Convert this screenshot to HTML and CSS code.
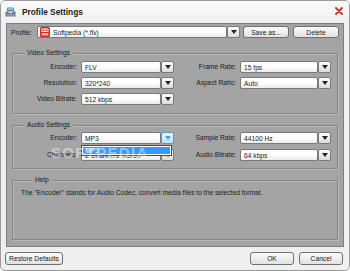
FILE: index.html
```html
<!DOCTYPE html>
<html lang="en">
<head>
  <meta charset="UTF-8">
  <title>Profile Settings</title>
  <link rel="stylesheet" href="styles.css">
</head>
<body>
  <div class="window">
    <div class="titlebar">
      <svg class="app-icon" width="11" height="10" viewBox="0 0 11 10">
        <rect x="2" y="0.5" width="7" height="4" rx="1" fill="#4a90d0"/>
        <rect x="3" y="1.5" width="5" height="1" fill="#cfe6fa"/>
        <path d="M0.5 4.5 h2.5 l1 1.5 h3 l1 -1.5 h2.5 v5 h-10 z" fill="#6a7686"/>
        <rect x="1.5" y="7" width="8" height="1.5" fill="#9aa6b4"/>
      </svg>
      <span class="title">Profile Settings</span>
      <svg class="close" width="8" height="8" viewBox="0 0 8 8">
        <path d="M1 1 L7 7 M7 1 L1 7" stroke="#c0392b" stroke-width="1.8" stroke-linecap="round"/>
      </svg>
    </div>

    <div class="panel">
      <div class="profile-row">
        <span class="profile-label">Profile:</span>
        <div class="combo profile-combo">
          <div class="field">
            <svg class="yt" width="10" height="10" viewBox="0 0 10 10">
              <rect x="0" y="0" width="10" height="10" rx="1.5" fill="#d42a1f"/>
              <rect x="1.5" y="1.5" width="7" height="3.5" rx="0.8" fill="#fff"/>
              <rect x="2.5" y="2.5" width="2" height="1.5" fill="#d42a1f"/>
              <rect x="5.5" y="2.5" width="2" height="1.5" fill="#d42a1f"/>
              <rect x="1.5" y="6" width="7" height="2.5" rx="0.8" fill="#f3b7b2"/>
            </svg>
            Softpedia (*.flv)
          </div>
          <div class="drop"></div>
        </div>
        <button class="btn save">Save as...</button>
        <button class="btn delete">Delete</button>
      </div>

      <fieldset class="group video">
        <legend>Video Settings</legend>
        <div class="grid">
          <span class="label">Encoder:</span>
          <div class="combo"><div class="field">FLV</div><div class="drop"></div></div>
          <span class="label">Frame Rate:</span>
          <div class="combo"><div class="field">15 fps</div><div class="drop"></div></div>

          <span class="label">Resolution:</span>
          <div class="combo"><div class="field">320*240</div><div class="drop"></div></div>
          <span class="label">Aspect Ratio:</span>
          <div class="combo"><div class="field">Auto</div><div class="drop"></div></div>

          <span class="label">Video Bitrate:</span>
          <div class="combo"><div class="field">512 kbps</div><div class="drop"></div></div>
        </div>
      </fieldset>

      <fieldset class="group audio">
        <legend>Audio Settings</legend>
        <div class="grid">
          <span class="label">Encoder:</span>
          <div class="combo open">
            <div class="field">MP3</div><div class="drop hover"></div>
            <ul class="dropdown">
              <li class="selected">MP3</li>
            </ul>
          </div>
          <span class="label">Sample Rate:</span>
          <div class="combo"><div class="field">44100 Hz</div><div class="drop"></div></div>

          <span class="label">Channels:</span>
          <div class="combo"><div class="field">2 Channels Stereo</div><div class="drop"></div></div>
          <span class="label">Audio Bitrate:</span>
          <div class="combo"><div class="field">64 kbps</div><div class="drop"></div></div>
        </div>
      </fieldset>

      <fieldset class="group help">
        <legend>Help</legend>
        <p>The "Encoder" stands for Audio Codec, convert media files to the selected format.</p>
      </fieldset>
    </div>

    <div class="footer">
      <button class="btn restore">Restore Defaults</button>
      <span class="spacer"></span>
      <button class="btn ok">OK</button>
      <button class="btn cancel">Cancel</button>
    </div>

    <div class="watermark">SOFTPEDIA</div>
  </div>
</body>
</html>
```

FILE: styles.css
```css
body {
  margin: 0;
  font-family: "Liberation Sans", Arial, sans-serif;
  font-size: 6.7px;
  color: #1a1a1a;
}

.window {
  position: relative;
  width: 350px;
  height: 271px;
  box-sizing: border-box;
  border: 1px solid #9b9b9b;
  border-radius: 5px;
  background: #efefef;
  display: flex;
  flex-direction: column;
  overflow: hidden;
}

.titlebar {
  height: 22px;
  flex-shrink: 0;
  display: flex;
  align-items: center;
  padding: 0 6px 0 4px;
  background: linear-gradient(#fbfbfb, #eeeeee);
}

.title {
  flex: 1;
  margin-left: 6px;
  font-size: 8.3px;
  font-weight: bold;
  color: #222;
}

.close {
  margin-top: -2px;
}

.panel {
  height: 224px;
  flex-shrink: 0;
  margin: 0 5px;
  box-sizing: border-box;
  border: 1px solid #7f7f7f;
  background: #a4a4a4;
  padding: 2px 4px 6px;
  display: flex;
  flex-direction: column;
}

.profile-row {
  display: flex;
  align-items: center;
  height: 12px;
}

.profile-label {
  width: 26px;
}

.profile-combo {
  width: 203px;
}

.combo {
  position: relative;
  display: flex;
  height: 12px;
}

.combo .field {
  flex: 1;
  min-width: 0;
  box-sizing: border-box;
  border: 1px solid #7a7a7a;
  border-radius: 2px;
  background: linear-gradient(#ffffff 45%, #ececec);
  padding-left: 3px;
  display: flex;
  align-items: center;
  white-space: nowrap;
  overflow: hidden;
}

.yt {
  margin: 0 3px 0 -1px;
  flex-shrink: 0;
}

.combo .drop {
  width: 13px;
  flex-shrink: 0;
  box-sizing: border-box;
  border: 1px solid #7a7a7a;
  border-radius: 2px;
  background: linear-gradient(#fdfdfd, #dcdcdc);
  display: flex;
  align-items: center;
  justify-content: center;
}

.combo .drop::after {
  content: "";
  border-left: 3.5px solid transparent;
  border-right: 3.5px solid transparent;
  border-top: 4px solid #222;
}

.combo .drop.hover {
  border-color: #5f97c2;
  background: linear-gradient(#eaf6fd, #bde3f8);
}

.combo .drop.hover::after {
  border-top-color: #6a97bb;
}

.dropdown {
  position: absolute;
  top: 13px;
  left: 0;
  width: 91px;
  margin: 0;
  padding: 1px;
  list-style: none;
  box-sizing: border-box;
  border: 1px solid #4a4a4a;
  background: #fff;
  z-index: 2;
}

.dropdown li {
  line-height: 7px;
  padding-left: 2px;
}

.dropdown li.selected {
  background: #3399ff;
  color: #fff;
}

.btn {
  height: 12px;
  padding: 0;
  box-sizing: border-box;
  border: 1px solid #707070;
  border-radius: 3px;
  background: linear-gradient(#fbfbfb, #e2e2e2);
  font: inherit;
  color: #1a1a1a;
}

.save {
  width: 46px;
  margin-left: 3px;
}

.delete {
  width: 46px;
  margin-left: 4px;
}

.group {
  margin: 7px 1px 0;
  padding: 3px 6px 7px 0;
  border: 1px solid #858585;
  box-shadow: 1px 1px 0 #b9b9b9, inset 1px 1px 0 #b9b9b9;
  min-width: 0;
}

.group legend {
  margin-left: 11px;
  padding: 0 3px;
  line-height: 8px;
  background: #a4a4a4;
}

.video {
  margin-top: 11px;
  padding-top: 4px;
  padding-bottom: 8px;
}

.grid {
  display: grid;
  grid-template-columns: 68px 93px 66px 91px;
  grid-auto-rows: 12px;
  row-gap: 4px;
}

.audio .grid {
  row-gap: 5px;
}

.label {
  text-align: right;
  padding-right: 4px;
  line-height: 12px;
  white-space: nowrap;
}

.help {
  flex: 1;
  padding: 5px 8px;
}

.help p {
  margin: 0;
  line-height: 8px;
  color: #222;
}

.footer {
  display: flex;
  padding: 5px 6px 0 4px;
}

.footer .btn {
  height: 13px;
}

.restore {
  width: 58px;
}

.spacer {
  flex: 1;
}

.ok {
  width: 44px;
}

.cancel {
  width: 44px;
  margin-left: 5px;
}

.watermark {
  position: absolute;
  left: 50px;
  top: 144px;
  font-size: 15px;
  line-height: 15px;
  font-weight: bold;
  letter-spacing: 1.3px;
  color: rgba(255, 255, 255, 0.45);
  pointer-events: none;
  z-index: 3;
}
```
